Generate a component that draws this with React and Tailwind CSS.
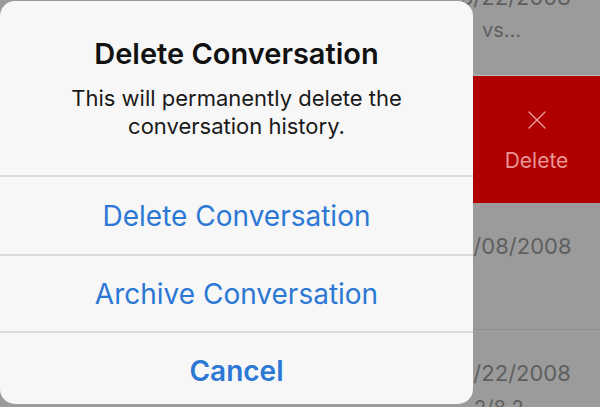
import { X } from "lucide-react";

function Row({ date, sub, height, line = true }) {
  return (
    <div
      className={`flex flex-col items-start pl-[474px] ${line ? "border-b border-[#8c8c8c]" : ""}`}
      style={{ height }}
    >
      {date && <div className="-ml-[14px] mt-[32px] text-[22px] leading-none text-[#5f5f5f]">{date}</div>}
      {sub && <div className="mt-[14px] text-[20px] leading-none text-[#5f5f5f]">{sub}</div>}
    </div>
  );
}

export default function App() {
  return (
    <div className="relative w-[600px] h-[407px] overflow-hidden bg-[#9b9b9b] font-['Inter',sans-serif]">
      <div className="flex flex-col">
        <div className="flex h-[76px] flex-col pl-[474px] border-b border-[#b9b9b9]">
          <div className="-ml-[14px] -mt-[14px] text-[22px] leading-none text-[#5f5f5f]">5/22/2008</div>
          <div className="ml-[8px] mt-[12px] text-[20px] leading-none text-[#5f5f5f]">vs...</div>
        </div>
        <div className="flex h-[127px] justify-end bg-[#b00000]">
          <div className="flex w-[127px] flex-col items-center pt-[28px]">
            <X size={32} strokeWidth={1.1} className="text-[#e89595]" />
            <div className="mt-[14px] text-[21px] leading-none text-[#e89595]">Delete</div>
          </div>
        </div>
        <Row date="5/08/2008" height={127} />
        <Row date="5/22/2008" sub="2/8 2" height={120} line={false} />
      </div>

      <div className="absolute left-0 top-[1px] flex h-[403px] w-[473px] flex-col rounded-[15px] bg-[#f7f7f7]">
        <div className="flex h-[174px] flex-col items-center pt-[38px] text-center">
          <div className="text-[29px] font-semibold leading-none text-[#111]">Delete Conversation</div>
          <div className="mt-[16px] text-[22px] leading-[28px] text-[#1a1a1a]">
            This will permanently delete the
            <br />
            conversation history.
          </div>
        </div>
        <div className="h-[2px] bg-[#dadada]" />
        <div className="flex h-[77px] items-center justify-center text-[28px] text-[#2c78d4]">
          Delete Conversation
        </div>
        <div className="h-[2px] bg-[#dadada]" />
        <div className="flex h-[75px] items-center justify-center text-[28px] text-[#2c78d4]">
          Archive Conversation
        </div>
        <div className="h-[2px] bg-[#dadada]" />
        <div className="flex flex-1 items-center justify-center pt-[4px] text-[28px] font-semibold text-[#2c78d4]">
          Cancel
        </div>
      </div>
    </div>
  );
}
